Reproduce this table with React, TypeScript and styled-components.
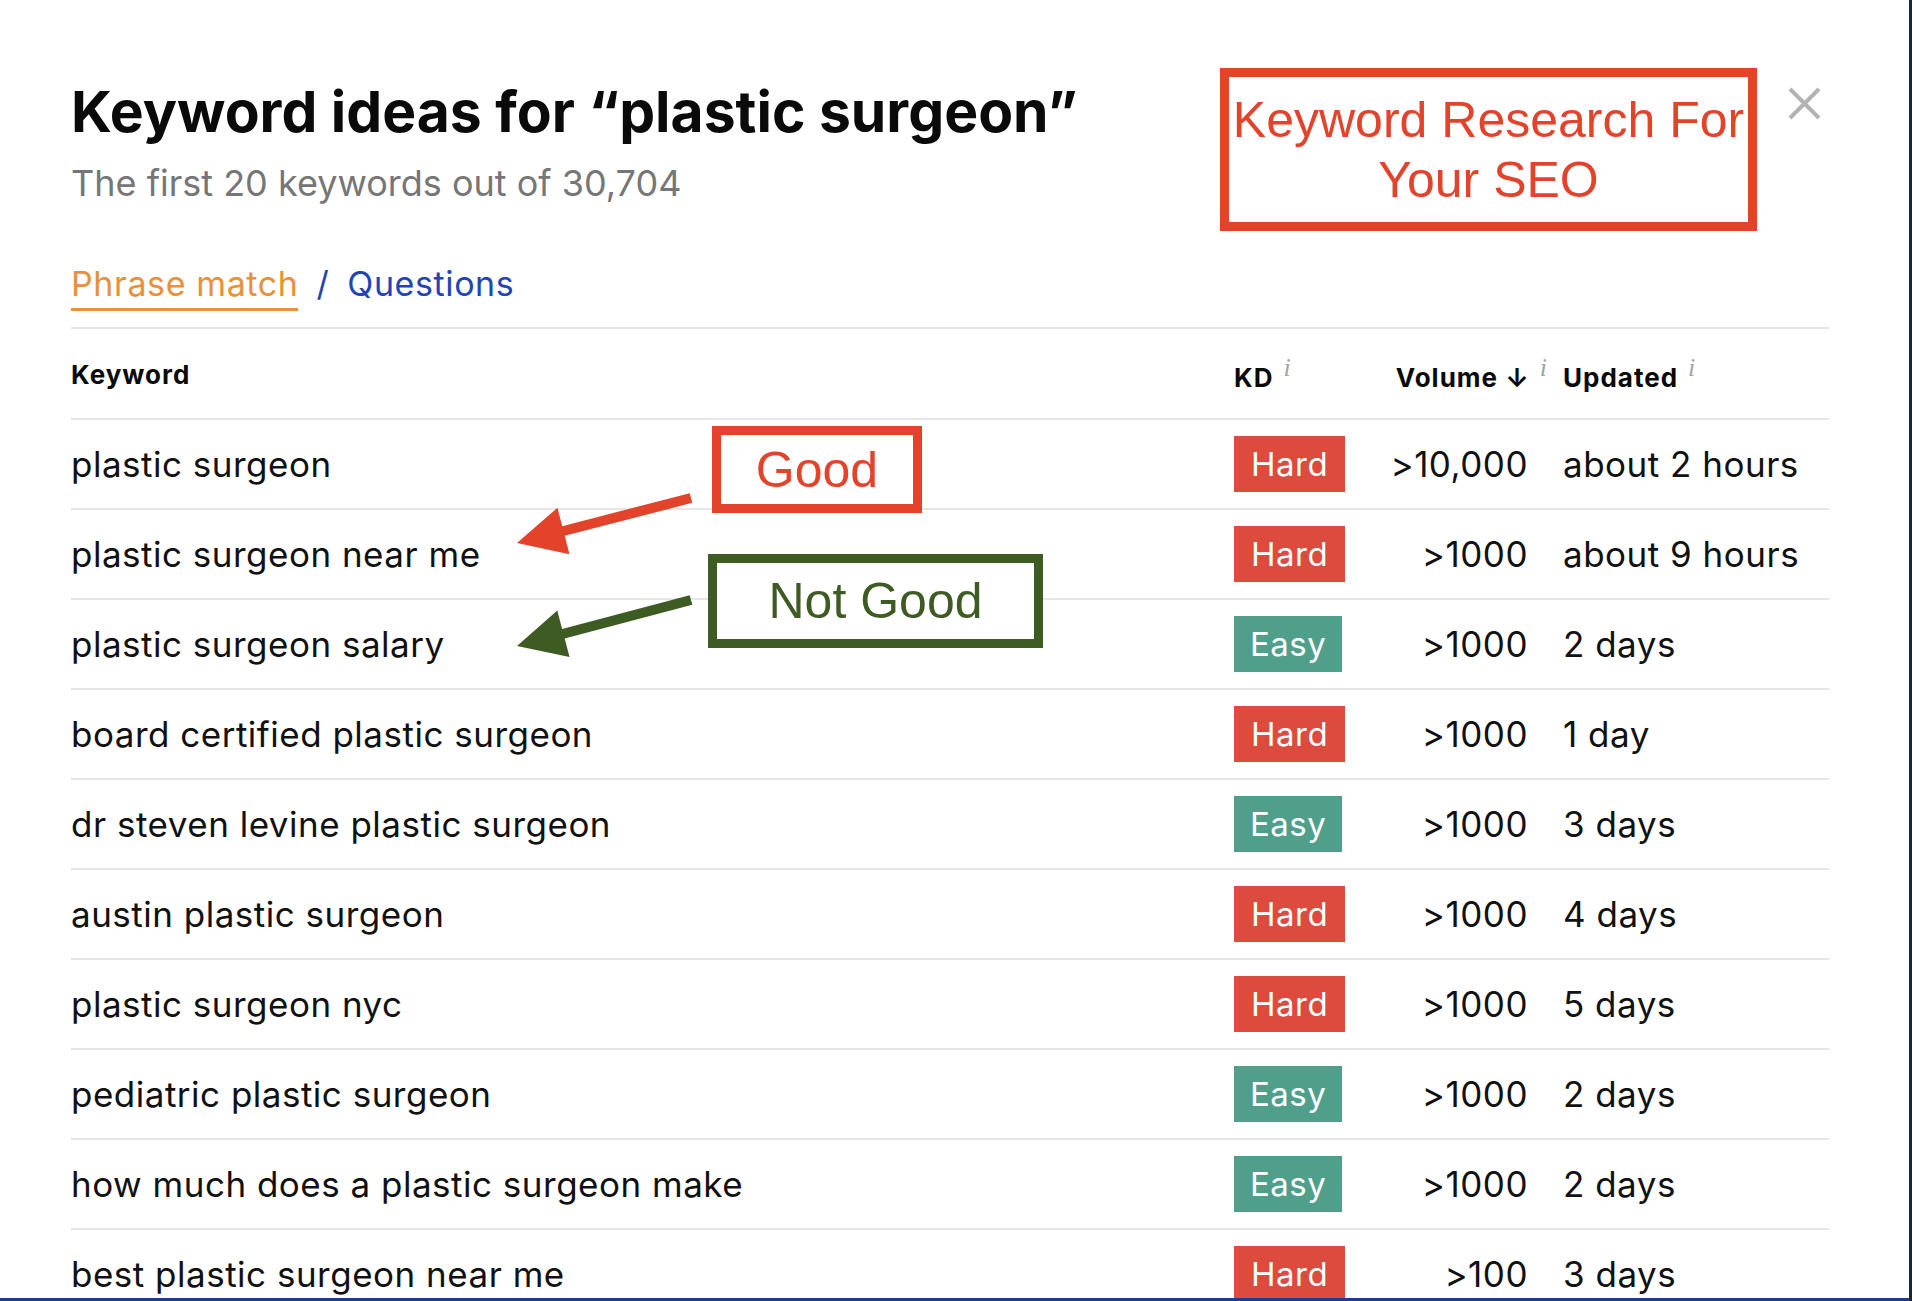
import React from 'react'
import styled, { createGlobalStyle } from 'styled-components'

type Difficulty = 'Hard' | 'Easy'

type KeywordRow = {
  keyword: string
  kd: Difficulty
  volume: string
  updated: string
}

const rows: KeywordRow[] = [
  { keyword: 'plastic surgeon', kd: 'Hard', volume: '>10,000', updated: 'about 2 hours' },
  { keyword: 'plastic surgeon near me', kd: 'Hard', volume: '>1000', updated: 'about 9 hours' },
  { keyword: 'plastic surgeon salary', kd: 'Easy', volume: '>1000', updated: '2 days' },
  { keyword: 'board certified plastic surgeon', kd: 'Hard', volume: '>1000', updated: '1 day' },
  { keyword: 'dr steven levine plastic surgeon', kd: 'Easy', volume: '>1000', updated: '3 days' },
  { keyword: 'austin plastic surgeon', kd: 'Hard', volume: '>1000', updated: '4 days' },
  { keyword: 'plastic surgeon nyc', kd: 'Hard', volume: '>1000', updated: '5 days' },
  { keyword: 'pediatric plastic surgeon', kd: 'Easy', volume: '>1000', updated: '2 days' },
  { keyword: 'how much does a plastic surgeon make', kd: 'Easy', volume: '>1000', updated: '2 days' },
  { keyword: 'best plastic surgeon near me', kd: 'Hard', volume: '>100', updated: '3 days' },
]

const RED = '#e3432a'
const GREEN = '#3f5b24'

type Point = [number, number]

type ArrowProps = {
  tail: Point
  tip: Point
  color: string
  shaft?: number
  headLength?: number
  headWidth?: number
}

// builds one polygon: shaft + head, in page coordinates
function arrowPoints({ tail, tip, shaft = 10, headLength = 48, headWidth = 48 }: ArrowProps) {
  const dx = tip[0] - tail[0]
  const dy = tip[1] - tail[1]
  const len = Math.hypot(dx, dy)
  const ux = dx / len
  const uy = dy / len
  const nx = -uy
  const ny = ux
  const bx = tip[0] - ux * headLength
  const by = tip[1] - uy * headLength
  const s = shaft / 2
  const h = headWidth / 2
  const pts: Point[] = [
    [tail[0] + nx * s, tail[1] + ny * s],
    [bx + nx * s, by + ny * s],
    [bx + nx * h, by + ny * h],
    tip,
    [bx - nx * h, by - ny * h],
    [bx - nx * s, by - ny * s],
    [tail[0] - nx * s, tail[1] - ny * s],
  ]
  return pts.map((p) => p.join(',')).join(' ')
}

const Arrow = (props: ArrowProps) => <polygon points={arrowPoints(props)} fill={props.color} />

export default function App() {
  return (
    <>
      <GlobalStyle />
      <Page>
        <Modal>
          <Header>
            <TitleBlock>
              <Title>Keyword ideas for “plastic surgeon”</Title>
              <Subtitle>The first 20 keywords out of 30,704</Subtitle>
              <Tabs>
                <Tab $active>Phrase match</Tab>
                <TabSlash>/</TabSlash>
                <Tab>Questions</Tab>
              </Tabs>
            </TitleBlock>
            <Callout>
              Keyword Research For
              <br />
              Your SEO
            </Callout>
            <CloseButton aria-label="Close">
              <svg width="33" height="33" viewBox="0 0 33 33">
                <path d="M2 2 L31 31 M31 2 L2 31" stroke="#b3b3b3" strokeWidth="4" />
              </svg>
            </CloseButton>
          </Header>

          <Divider />

          <HeadRow>
            <HeadCell $lift>Keyword</HeadCell>
            <HeadCell>
              KD<Info>i</Info>
            </HeadCell>
            <HeadCell $right>
              Volume&nbsp;↓<Info $hang>i</Info>
            </HeadCell>
            <HeadCell $padLeft>
              Updated<Info>i</Info>
            </HeadCell>
          </HeadRow>

          {rows.map((row) => (
            <Row key={row.keyword}>
              <Cell>{row.keyword}</Cell>
              <Cell>
                <Badge $kind={row.kd}>{row.kd}</Badge>
              </Cell>
              <Cell $right>{row.volume}</Cell>
              <Cell $padLeft>{row.updated}</Cell>
            </Row>
          ))}

          <NoteBox $color={RED} style={{ left: 712, top: 426, width: 210, height: 87 }}>
            Good
          </NoteBox>
          <NoteBox $color={GREEN} style={{ left: 708, top: 554, width: 335, height: 94 }}>
            Not Good
          </NoteBox>
          <ArrowLayer width="200" height="190" viewBox="500 480 200 190">
            <Arrow tail={[691, 498]} tip={[517, 543]} color={RED} />
            <Arrow tail={[691, 600]} tip={[517, 646]} color={GREEN} />
          </ArrowLayer>
        </Modal>
        <EdgeStrip />
      </Page>
    </>
  )
}

const GlobalStyle = createGlobalStyle`
  *, *::before, *::after { box-sizing: border-box; }
  html, body {
    margin: 0;
    padding: 0;
    background: #ffffff;
  }
  body {
    font-family: Inter, "Noto Sans", sans-serif;
    color: #111111;
  }
`

const Page = styled.div`
  display: flex;
  width: 1912px;
  height: 1301px;
  overflow: hidden;
`

const Modal = styled.div`
  position: relative;
  flex: 1;
  height: 1301px;
  padding: 0 80px 0 71px;
  background: #ffffff;
  border-bottom: 3px solid #1f3d8f;
  overflow: hidden;
`

const EdgeStrip = styled.div`
  width: 3px;
  background: #1c2830;
`

const Header = styled.div`
  display: flex;
  align-items: flex-start;
`

const TitleBlock = styled.div`
  flex: 1;
  padding-top: 80px;
`

const Title = styled.h1`
  margin: 0;
  font-family: Inter, sans-serif;
  font-weight: 700;
  font-size: 57px;
  line-height: 64px;
  color: #0a0a0a;
  white-space: nowrap;
`

const Subtitle = styled.p`
  margin: 17px 0 0;
  font-size: 36px;
  line-height: 44px;
  color: #767676;
`

const Tabs = styled.div`
  display: flex;
  align-items: flex-start;
  gap: 18px;
  margin-top: 59px;
  font-size: 34px;
  line-height: 40px;
  letter-spacing: 0.6px;
`

const Tab = styled.span<{ $active?: boolean }>`
  padding-bottom: 4px;
  border-bottom: 3px solid ${({ $active }) => ($active ? '#e8913d' : 'transparent')};
  color: ${({ $active }) => ($active ? '#e8913d' : '#2244b5')};
`

const TabSlash = styled.span`
  color: #2244b5;
`

const Callout = styled.div`
  margin-top: 68px;
  width: 537px;
  height: 163px;
  border: 9px solid ${RED};
  display: flex;
  align-items: center;
  justify-content: center;
  text-align: center;
  font-family: "Liberation Sans", Arial, sans-serif;
  font-size: 50px;
  line-height: 60px;
  color: ${RED};
  white-space: nowrap;
`

const CloseButton = styled.button`
  margin: 87px 8px 0 31px;
  padding: 0;
  width: 33px;
  height: 33px;
  border: none;
  background: transparent;
  display: flex;
`

const Divider = styled.div`
  margin-top: 16px;
  height: 2px;
  background: #e6e6e6;
`

const grid = `
  display: grid;
  grid-template-columns: 1163px 140px 154px 1fr;
  align-items: center;
  border-bottom: 2px solid #e6e6e6;
`

const HeadRow = styled.div`
  ${grid}
  height: 91px;
  padding-top: 4px;
`

const HeadCell = styled.div<{ $right?: boolean; $padLeft?: boolean; $lift?: boolean }>`
  font-weight: 700;
  font-size: 26px;
  line-height: 30px;
  letter-spacing: 1px;
  color: #0a0a0a;
  white-space: nowrap;
  text-align: ${({ $right }) => ($right ? 'right' : 'left')};
  padding-left: ${({ $padLeft }) => ($padLeft ? '35px' : '0')};
  margin-top: ${({ $lift }) => ($lift ? '-2px' : '0')};
`

const Info = styled.span<{ $hang?: boolean }>`
  display: inline-block;
  margin-left: 10px;
  margin-right: ${({ $hang }) => ($hang ? '-20px' : '0')};
  font-family: "Liberation Serif", serif;
  font-style: italic;
  font-weight: 400;
  font-size: 26px;
  line-height: 20px;
  color: #a3a3a3;
  vertical-align: 11px;
`

const Row = styled.div`
  ${grid}
  height: 90px;
`

const Cell = styled.div<{ $right?: boolean; $padLeft?: boolean }>`
  font-size: 35px;
  line-height: 42px;
  letter-spacing: 0.5px;
  color: #111111;
  white-space: nowrap;
  text-align: ${({ $right }) => ($right ? 'right' : 'left')};
  padding-left: ${({ $padLeft }) => ($padLeft ? '35px' : '0')};
`

const Badge = styled.span<{ $kind: Difficulty }>`
  display: inline-flex;
  align-items: center;
  height: 56px;
  padding: 0 ${({ $kind }) => ($kind === 'Hard' ? '17px' : '16px')};
  background: ${({ $kind }) => ($kind === 'Hard' ? '#dd4a3e' : '#4f9f8a')};
  color: #ffffff;
  font-size: 33px;
  letter-spacing: 0.5px;
`

const NoteBox = styled.div<{ $color: string }>`
  position: absolute;
  border: 9px solid ${({ $color }) => $color};
  background: #ffffff;
  display: flex;
  align-items: center;
  justify-content: center;
  font-family: "Liberation Sans", Arial, sans-serif;
  font-size: 50px;
  line-height: 1;
  color: ${({ $color }) => $color};
  white-space: nowrap;
`

const ArrowLayer = styled.svg`
  position: absolute;
  left: 500px;
  top: 480px;
  overflow: visible;
  pointer-events: none;
`
